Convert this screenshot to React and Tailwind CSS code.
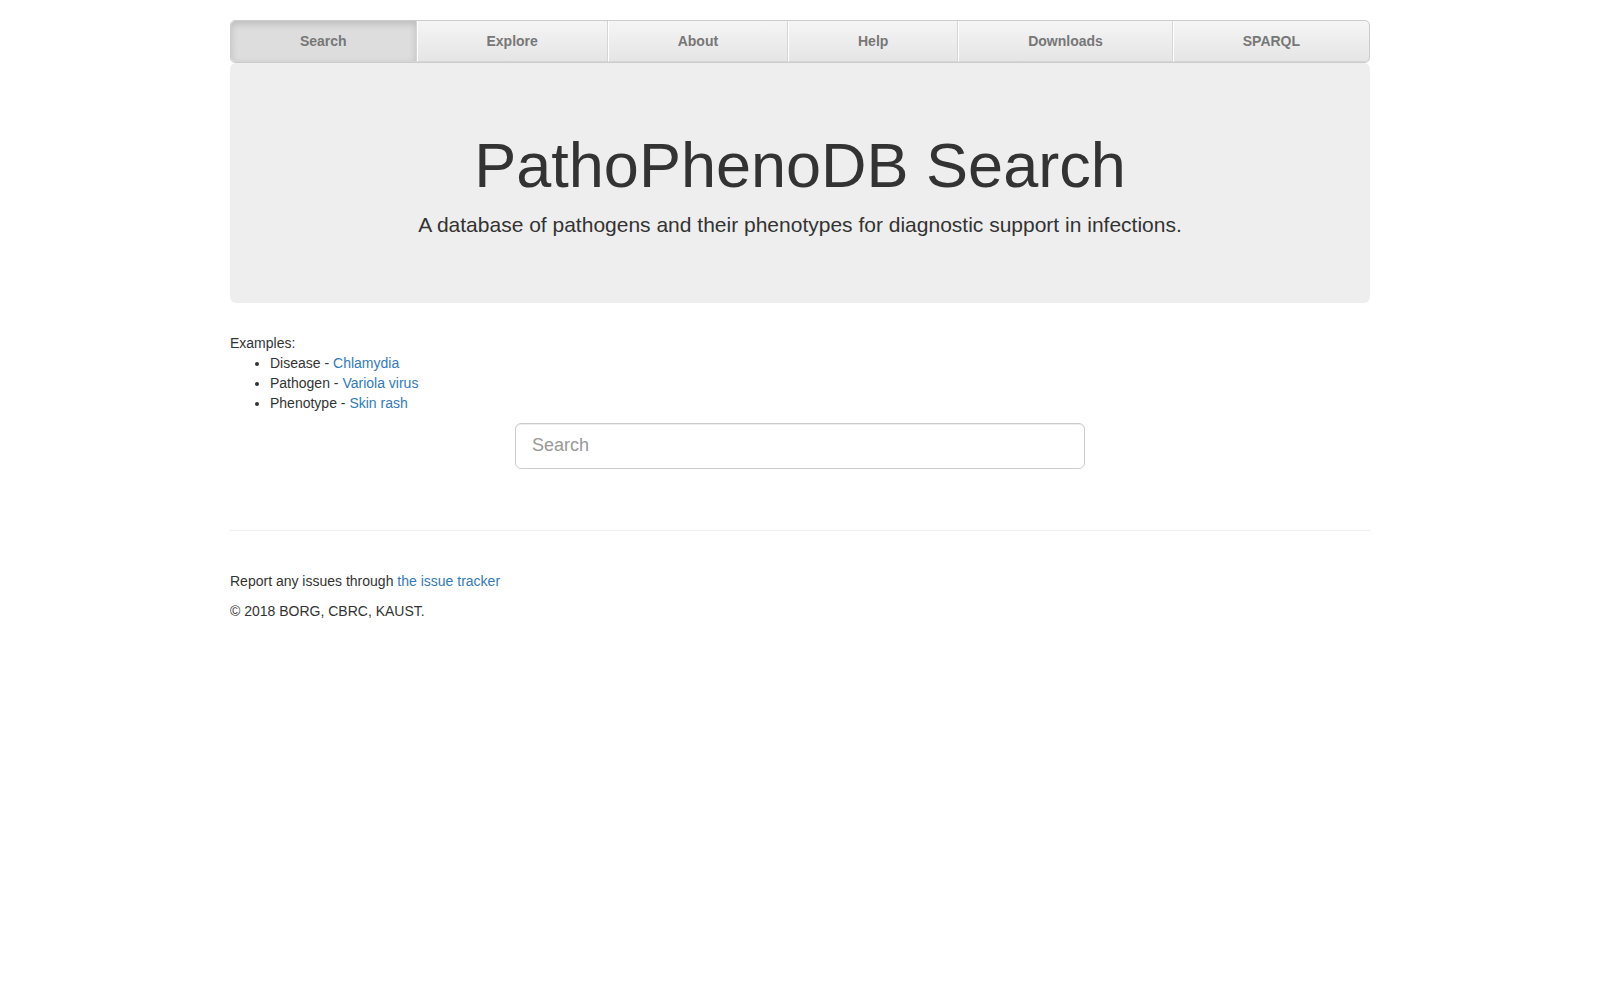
import React from "react";

const tabs = ["Search", "Explore", "About", "Help", "Downloads", "SPARQL"];

const examples = [
  { kind: "Disease", name: "Chlamydia" },
  { kind: "Pathogen", name: "Variola virus" },
  { kind: "Phenotype", name: "Skin rash" },
];

function App() {
  return (
    <div className="min-h-screen bg-white font-['Liberation_Sans',Arial,sans-serif] text-sm leading-5 text-[#333333] antialiased">
      <div className="mx-auto w-[1170px] px-[15px] pt-5">
        <ul className="table w-full rounded-[5px] border border-[#cccccc] bg-[#eeeeee]">
          {tabs.map((tab, i) => (
            <li key={tab} className="table-cell w-[1%]">
              <a
                href="#"
                className={`block border-b border-b-[#d5d5d5] px-[15px] py-2.5 text-center font-bold text-[#777777] ${
                  i === 0
                    ? "rounded-l-[5px] bg-[#dddddd] shadow-[inset_0_3px_7px_rgba(0,0,0,0.15)]"
                    : "border-l border-l-white bg-gradient-to-b from-[#f5f5f5] to-[#e5e5e5]"
                } ${i === tabs.length - 1 ? "rounded-r-[5px]" : "border-r border-r-[#d5d5d5]"}`}
              >
                {tab}
              </a>
            </li>
          ))}
        </ul>

        <div className="mb-[30px] rounded-[6px] bg-[#eeeeee] px-[60px] py-12 text-center">
          <h1 className="mt-5 mb-2.5 text-[63px] leading-[1.1] font-medium">
            PathoPhenoDB Search
          </h1>
          <p className="mb-[15px] text-[21px] leading-[30px] font-light">
            A database of pathogens and their phenotypes for diagnostic support in infections.
          </p>
        </div>

        <div>Examples:</div>
        <ul className="mb-2.5 list-disc pl-10">
          {examples.map((ex) => (
            <li key={ex.kind}>
              {ex.kind} -{" "}
              <a href="#" className="text-[#337ab7]">
                {ex.name}
              </a>
            </li>
          ))}
        </ul>

        <div className="flex justify-center">
          <input
            type="text"
            placeholder="Search"
            className="h-[46px] w-[570px] rounded-[6px] border border-[#cccccc] px-4 pb-[2px] text-lg leading-[1.33] text-[#555555] shadow-[inset_0_1px_1px_rgba(0,0,0,0.075)] outline-none placeholder:text-[#999999]"
          />
        </div>

        <hr className="mt-[61px] mb-5 border-t border-[#eeeeee]" />

        <footer className="pt-5">
          <p className="mb-2.5">
            Report any issues through{" "}
            <a href="#" className="text-[#337ab7]">
              the issue tracker
            </a>
          </p>
          <p className="mb-2.5">© 2018 BORG, CBRC, KAUST.</p>
        </footer>
      </div>
    </div>
  );
}

export default App;
